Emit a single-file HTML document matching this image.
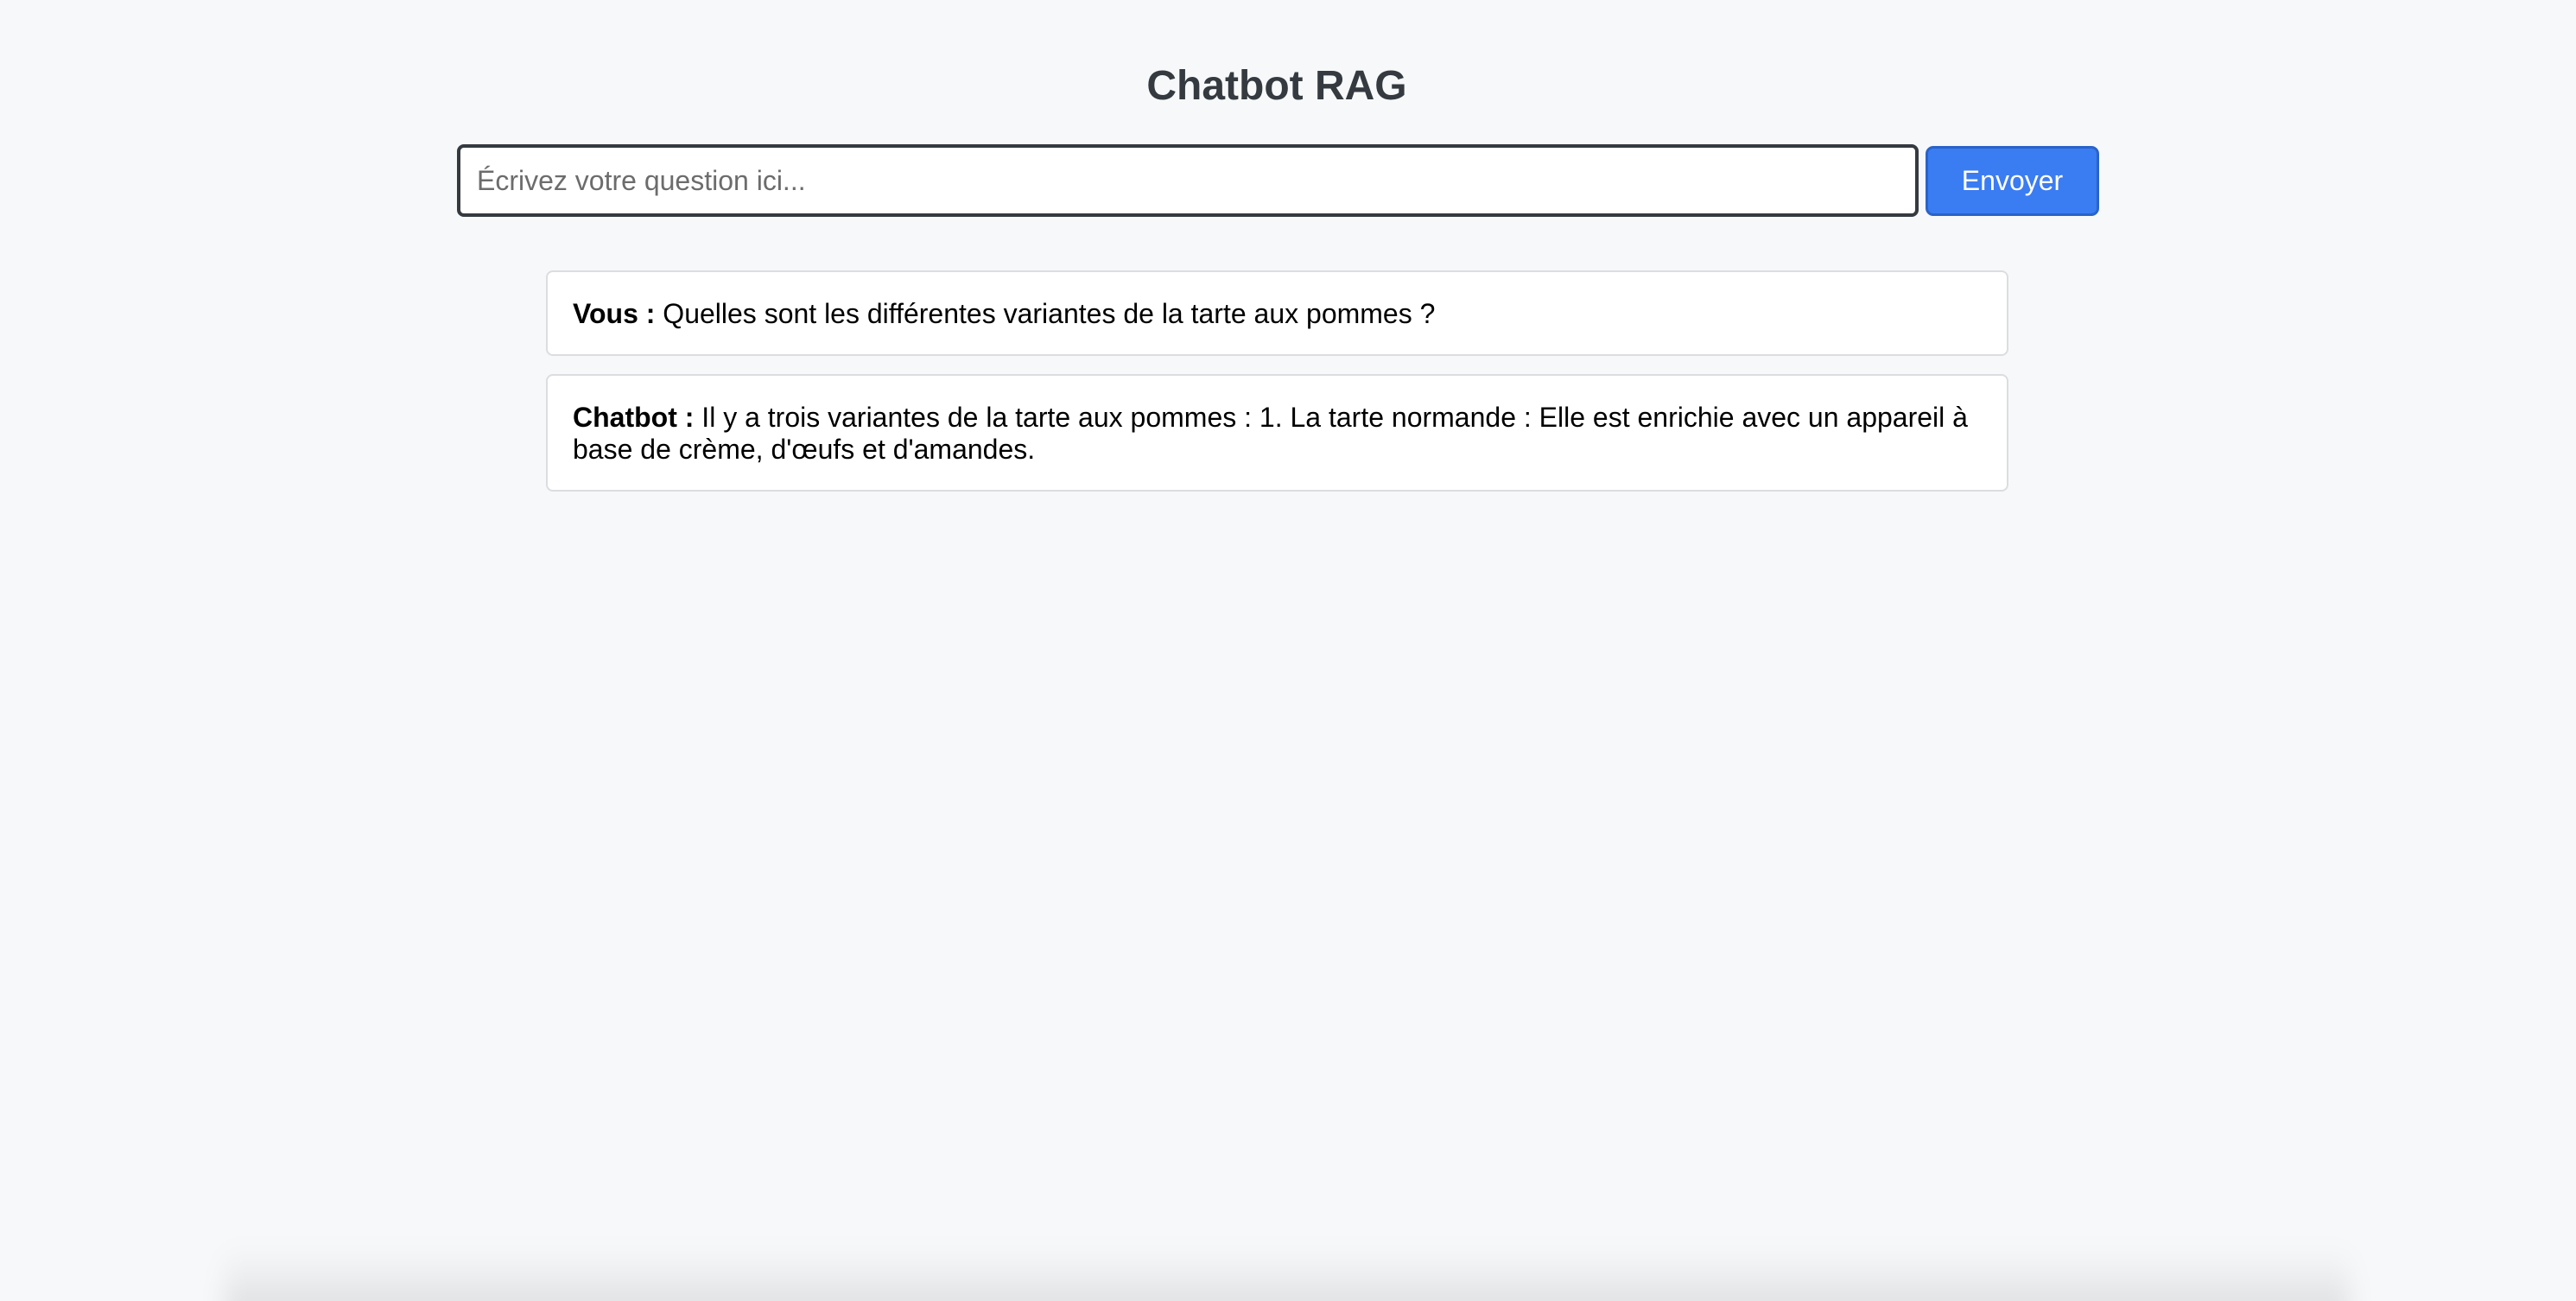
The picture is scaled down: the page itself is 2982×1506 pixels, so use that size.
<!DOCTYPE html>
<html><head><meta charset="utf-8"><style>
html,body{margin:0;padding:0;width:2982px;height:1506px;overflow:hidden;}
body{background:#f7f8fa;font-family:"Liberation Sans",Arial,sans-serif;position:relative;}
h1{position:absolute;top:68px;left:-13px;width:100%;text-align:center;margin:0;font-size:48px;font-weight:bold;color:#343a40;line-height:64px;}
.inp{position:absolute;left:529px;top:167px;width:1684px;height:76px;border:4px solid #343a40;border-radius:8px;background:#fff;box-sizing:content-box;}
.inp span{position:absolute;left:19px;top:19px;font-size:32px;color:#6c6c6c;line-height:38px;}
.btn{position:absolute;left:2229px;top:169px;width:195px;height:75px;background:#3a7cf2;border:3px solid #2a63c8;border-radius:9px;color:#fff;font-size:32px;text-align:center;line-height:75px;}
.msg{position:absolute;left:632px;width:1693px;background:#fff;border:2px solid #dcdde0;border-radius:8px;padding:30px 29px;font-size:32px;line-height:37px;color:#000;box-sizing:border-box;}
.shadow{position:absolute;left:260px;width:2460px;top:1440px;height:90px;background:linear-gradient(to bottom,rgba(0,0,0,0) 0%,rgba(0,0,0,0.03) 35%,rgba(0,0,0,0.085) 75%,rgba(0,0,0,0.1) 100%);filter:blur(14px);}
</style></head><body>
<h1>Chatbot RAG</h1>
<div class="inp"><span>Écrivez votre question ici...</span></div>
<div class="btn">Envoyer</div>
<div class="msg" style="top:313px;height:99px;"><b>Vous :</b> Quelles sont les différentes variantes de la tarte aux pommes ?</div>
<div class="msg" style="top:433px;height:136px;"><b>Chatbot :</b> Il y a trois variantes de la tarte aux pommes : 1. La tarte normande : Elle est enrichie avec un appareil à base de crème, d'œufs et d'amandes.</div>
<div class="shadow"></div>
</body></html>
